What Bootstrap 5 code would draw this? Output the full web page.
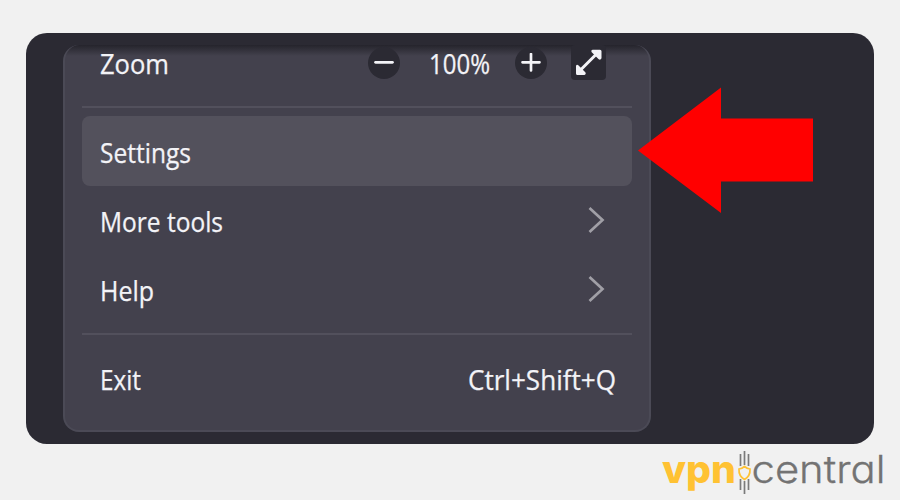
<!DOCTYPE html>
<html lang="en">
<head>
<meta charset="utf-8">
<meta name="viewport" content="width=device-width, initial-scale=1">
<title>Browser menu</title>
<link href="https://cdn.jsdelivr.net/npm/bootstrap@5.3.0/dist/css/bootstrap.min.css" rel="stylesheet">
<style>
body{width:900px;height:500px;overflow:hidden;background:#f1f1f1;font-family:"Open Sans","Noto Sans",sans-serif;padding:33px 26px 0}
.stage{height:411px;background:#2b2a33;border-radius:21px;padding:12px 0 0 37px}
.app-menu{width:588px;height:387px;background:linear-gradient(#25242c,#302f38 4px,#43414d 11px);border:2px solid #4b4a56;border-top:0;border-radius:16px;padding:0 17px;color:#f3f3f7;font-size:26.5px;line-height:1;overflow:hidden}
.menu-row{height:69px;padding:0 16px 0 18px}
.zoom-row{height:60px;padding-right:26px;padding-bottom:25px}
.active-row{background:#53515c;border-radius:8px;height:70px}
.rule{height:2px;background:#52505c;margin-top:1px}
.t-svg{display:block;overflow:visible}
.t-svg text{stroke:currentColor;stroke-width:.25}
.round-btn{width:32px;height:32px;background:#2b2a33;border-radius:50%}
.full-btn{width:35px;height:35px;background:#2b2a33;border-radius:4px}
.chev{margin-bottom:2px}
.arrow{left:638px;top:87px}
.brand{width:230px;height:51px;margin:5px 0 0 633px;overflow:visible;font-family:Inter,sans-serif}
.brand-thin{font-feature-settings:"cv11"}
</style>
</head>
<body>
<main class="stage">
  <div class="app-menu">
    <div class="menu-row zoom-row d-flex align-items-center">
      <svg class="t-svg" width="69" height="36"><text x="0" y="28.500" fill="currentColor" textLength="69" lengthAdjust="spacingAndGlyphs">Zoom</text></svg>
      <div class="round-btn ms-auto d-flex align-items-center justify-content-center"><svg width="20" height="20"><path d="M1.500 9.300h17" stroke="#f3f3f7" stroke-width="2.700" stroke-linecap="round"/></svg></div>
      <svg class="t-svg" style="margin-left:29px" width="61" height="36"><text x="0" y="28.500" fill="currentColor" textLength="61" lengthAdjust="spacingAndGlyphs">100%</text></svg>
      <div class="round-btn d-flex align-items-center justify-content-center" style="margin-left:25px"><svg width="20" height="20"><path d="M1.500 9.300h17M10 1v16.500" stroke="#f3f3f7" stroke-width="2.700" stroke-linecap="round"/></svg></div>
      <div class="full-btn d-flex align-items-center justify-content-center" style="margin-left:24px"><svg width="27" height="27"><path d="M6 20.500L21 5.500" stroke="#f3f3f7" stroke-width="3"/><path d="M17.500 .8h7.500q1.500 0 1.500 1.500v7q-1 2.200-2.800 1l-7.200-7.200q-.8-1.800 1-2.300zM1 17v7.500q0 1.500 1.500 1.500h7q2-.8 1-2.600l-7.200-7.200q-1.800-1-2.300.8z" fill="#f3f3f7"/></svg></div>
    </div>
    <div class="rule"></div>
    <div class="menu-row active-row d-flex align-items-center" style="margin-top:8px">
      <svg class="t-svg" width="91" height="36"><text x="0" y="29.500" fill="currentColor" textLength="91" lengthAdjust="spacingAndGlyphs">Settings</text></svg>
    </div>
    <div class="menu-row d-flex align-items-center justify-content-between">
      <svg class="t-svg" width="124" height="36"><text x="0" y="29" fill="currentColor" textLength="123" lengthAdjust="spacingAndGlyphs">More tools</text></svg>
      <svg class="chev" width="28" height="28"><path d="M1.500 2l13 12-13 12" fill="none" stroke="#a09fa6" stroke-width="2.700"/></svg>
    </div>
    <div class="menu-row d-flex align-items-center justify-content-between">
      <svg class="t-svg" width="54" height="36"><text x="0" y="29" fill="currentColor" textLength="54" lengthAdjust="spacingAndGlyphs">Help</text></svg>
      <svg class="chev" width="28" height="28"><path d="M1.500 2l13 12-13 12" fill="none" stroke="#a09fa6" stroke-width="2.700"/></svg>
    </div>
    <div class="rule" style="margin-top:9px"></div>
    <div class="menu-row d-flex align-items-center justify-content-between" style="margin-top:10px">
      <svg class="t-svg" width="41" height="36"><text x="0" y="28" fill="currentColor" textLength="41" lengthAdjust="spacingAndGlyphs">Exit</text></svg>
      <svg class="t-svg" width="148" height="36"><text x="0" y="28" fill="currentColor" textLength="148" lengthAdjust="spacingAndGlyphs">Ctrl+Shift+Q</text></svg>
    </div>
  </div>
</main>
<svg class="arrow position-absolute" width="176" height="127"><path d="M0 63.500L83 .5V31.500H175V94.500H83V126z" fill="red"/></svg>
<svg class="brand d-block" viewBox="0 0 230 51">
  <text x="3" y="34" font-weight="800" font-size="39" fill="#ffc233" textLength="74" lengthAdjust="spacingAndGlyphs">vpn</text>
  <text class="brand-thin" x="92.500" y="34.200" font-weight="300" font-size="38" fill="#737373" stroke="#737373" stroke-width=".3" textLength="134" lengthAdjust="spacingAndGlyphs">central</text>
  <g fill="none" stroke="#7b7b7b" stroke-width="1.700"><path d="M81.500 5v12M85.500 2v14M89.500 5v12M81.500 30v11M85.500 32v13M89.500 30v11"/></g>
  <path d="M85.500 17.500q3 2.500 5.500 2.500 .5 7-5.500 10.500-6-3.500-5.500-10.500 2.500 0 5.500-2.500z" fill="#f1f1f1" stroke="#ffc233" stroke-width="1.700"/>
</svg>
<script src="https://cdn.jsdelivr.net/npm/bootstrap@5.3.0/dist/js/bootstrap.bundle.min.js"></script>
</body>
</html>
